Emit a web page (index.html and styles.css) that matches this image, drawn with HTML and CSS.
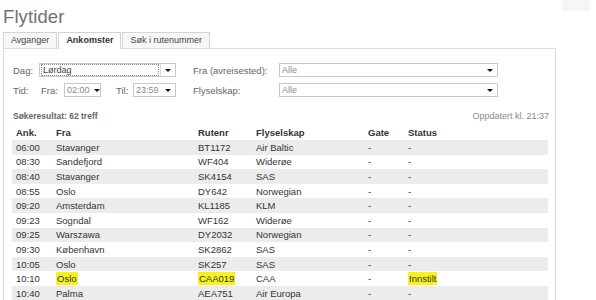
FILE: index.html
```html
<!DOCTYPE html>
<html lang="no">
<head>
<meta charset="utf-8">
<title>Flytider</title>
<link rel="stylesheet" href="styles.css">
</head>
<body>
<div class="corner"></div>
<div class="page">
  <h1 class="title">Flytider</h1>
  <div class="tabs">
    <span class="tab">Avganger</span>
    <span class="tab active">Ankomster</span>
    <span class="tab">Søk i rutenummer</span>
  </div>
  <div class="panel">
    <div class="filters">
      <div class="frow">
        <span class="lbl w-dag">Dag:</span>
        <div class="sel w-day focus"><span class="val dark">Lørdag</span><span class="sep"></span><span class="arr"></span></div>
        <span class="lbl w-right">Fra (avreisested):</span>
        <div class="sel w-wide"><span class="val">Alle</span><span class="arr"></span></div>
      </div>
      <div class="frow">
        <span class="lbl w-tid">Tid:</span>
        <span class="lbl w-fra">Fra:</span>
        <div class="sel w-from"><span class="val">02:00</span><span class="arr"></span></div>
        <span class="lbl w-til">Til:</span>
        <div class="sel w-to"><span class="val">23:59</span><span class="arr"></span></div>
        <span class="lbl w-right">Flyselskap:</span>
        <div class="sel w-wide"><span class="val">Alle</span><span class="arr"></span></div>
      </div>
    </div>
    <div class="resultbar">
      <span class="count">Søkeresultat: 62 treff</span>
      <span class="updated">Oppdatert kl. 21:37</span>
    </div>
    <table class="flights">
      <thead>
        <tr><th class="c1">Ank.</th><th class="c2">Fra</th><th class="c3">Rutenr</th><th class="c4">Flyselskap</th><th class="c5">Gate</th><th class="c6">Status</th></tr>
      </thead>
      <tbody>
        <tr><td>06:00</td><td>Stavanger</td><td>BT1172</td><td>Air Baltic</td><td>-</td><td>-</td></tr>
        <tr><td>08:30</td><td>Sandefjord</td><td>WF404</td><td>Widerøe</td><td>-</td><td>-</td></tr>
        <tr><td>08:40</td><td>Stavanger</td><td>SK4154</td><td>SAS</td><td>-</td><td>-</td></tr>
        <tr><td>08:55</td><td>Oslo</td><td>DY642</td><td>Norwegian</td><td>-</td><td>-</td></tr>
        <tr><td>09:20</td><td>Amsterdam</td><td>KL1185</td><td>KLM</td><td>-</td><td>-</td></tr>
        <tr><td>09:23</td><td>Sogndal</td><td>WF162</td><td>Widerøe</td><td>-</td><td>-</td></tr>
        <tr><td>09:25</td><td>Warszawa</td><td>DY2032</td><td>Norwegian</td><td>-</td><td>-</td></tr>
        <tr><td>09:30</td><td>København</td><td>SK2862</td><td>SAS</td><td>-</td><td>-</td></tr>
        <tr><td>10:05</td><td>Oslo</td><td>SK257</td><td>SAS</td><td>-</td><td>-</td></tr>
        <tr><td>10:10</td><td><mark>Oslo</mark></td><td><mark>CAA019</mark></td><td>CAA</td><td>-</td><td><mark>Innstilt</mark></td></tr>
        <tr><td>10:40</td><td>Palma</td><td>AEA751</td><td>Air Europa</td><td>-</td><td>-</td></tr>
      </tbody>
    </table>
  </div>
</div>
</body>
</html>
```
FILE: styles.css
```css
html, body {
  margin: 0;
  padding: 0;
  background: #fff;
  height: 300px;
  overflow: hidden;
}
body {
  font-family: "Liberation Sans", Arial, sans-serif;
  color: #333;
  position: relative;
}
.corner {
  position: absolute;
  top: 0;
  left: 562px;
  width: 28px;
  height: 11px;
  background: #f6f6f6;
}
.page {
  padding-left: 3px;
  width: 553px;
}
.title {
  margin: 0;
  padding-top: 6px;
  height: 26px;
  font-size: 18.5px;
  font-weight: normal;
  color: #707070;
  line-height: 22px;
  letter-spacing: 0.1px;
}
.tabs {
  display: flex;
  height: 16px;
  align-items: flex-end;
}
.tab {
  box-sizing: border-box;
  height: 16px;
  padding: 0 7px;
  border: 1px solid #d4d4d4;
  border-bottom: none;
  background: #f7f7f7;
  font-size: 9px;
  line-height: 15px;
  color: #444;
  margin-right: 1px;
}
.tab.active {
  background: #fff;
  font-weight: bold;
  color: #333;
  position: relative;
  top: 1px;
  height: 17px;
}
.panel {
  box-sizing: border-box;
  border: 1px solid #dcdcdc;
  border-bottom: none;
  height: 260px;
  padding: 14px 0 0 8px;
}
.filters {
  display: flex;
  flex-direction: column;
  gap: 6px;
  padding-left: 1px;
}
.frow {
  display: flex;
  align-items: center;
  height: 14px;
}
.lbl {
  font-size: 9.5px;
  color: #666;
  white-space: nowrap;
}
.w-dag { width: 26px; }
.w-tid { width: 28px; }
.w-fra { width: 23px; }
.w-til { width: 17px; margin-left: 15px; }
.w-right { width: 86px; margin-left: 17px; }
.sel {
  box-sizing: border-box;
  height: 14px;
  border: 1px solid #c9c9c9;
  background: #fff;
  display: flex;
  align-items: center;
  position: relative;
}
.w-day { width: 137px; }
.w-from { width: 37px; }
.w-to { width: 43px; }
.w-wide { width: 219px; }
.val {
  flex: 1;
  font-size: 9px;
  color: #8a8a8a;
  padding-left: 2px;
  line-height: 12px;
}
.val.dark { color: #444; }
.focus .val {
  margin: 1px;
  outline: 1px dotted #888;
  outline-offset: -1px;
}
.sep {
  width: 1px;
  height: 12px;
  background: #ddd;
}
.arr {
  width: 0;
  height: 0;
  margin: 0 4px 0 4px;
  border-left: 3px solid transparent;
  border-right: 3px solid transparent;
  border-top: 3px solid #111;
}
.resultbar {
  display: flex;
  justify-content: space-between;
  align-items: center;
  margin-top: 13px;
  height: 12px;
  width: 537px;
}
.count {
  font-size: 8.5px;
  font-weight: bold;
  color: #666;
  padding-left: 1px;
}
.updated {
  font-size: 9px;
  color: #888;
}
.flights {
  border-collapse: collapse;
  margin-top: 3px;
  width: 536px;
  table-layout: fixed;
}
.flights th {
  text-align: left;
  font-size: 9.5px;
  font-weight: bold;
  color: #333;
  height: 15px;
  padding: 0;
}
.flights td {
  font-size: 9.5px;
  color: #333;
  height: 14.6px;
  padding: 0;
  white-space: nowrap;
}
.flights th:first-child,
.flights td:first-child { padding-left: 4px; }
.c1 { width: 40px; }
.c2 { width: 142px; }
.c3 { width: 58px; }
.c4 { width: 112px; }
.c5 { width: 40px; }
.flights tbody tr:nth-child(odd) { background: #ececec; }
mark {
  background: #f7f21e;
  color: #333;
  padding: 1px 1px;
}
```
